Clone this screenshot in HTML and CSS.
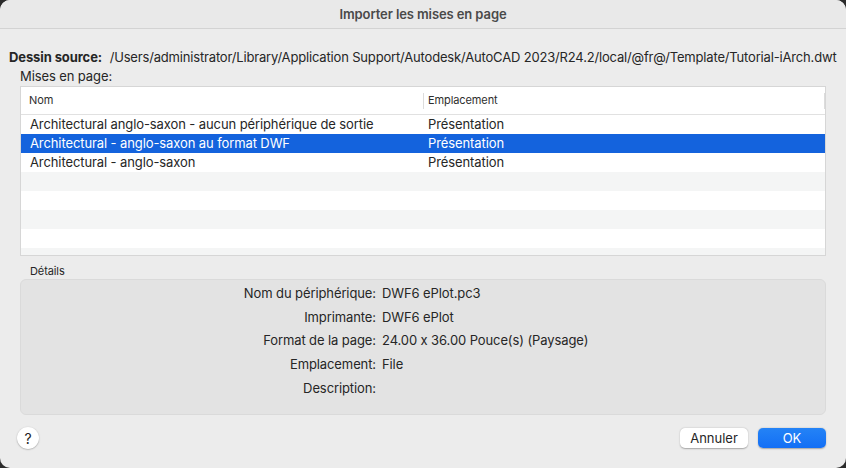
FILE: index.html
```html
<!DOCTYPE html>
<html lang="fr">
<head>
  <meta charset="UTF-8" />
  <title>Importer les mises en page</title>
  <link rel="stylesheet" href="styles.css">
</head>
<body>

  <div class="window">
    <div class="titlebar">Importer les mises en page</div>

    <div class="source">
      <span class="source-label">Dessin source:</span>
      <span class="source-path">/Users/administrator/Library/Application Support/Autodesk/AutoCAD 2023/R24.2/local/@fr@/Template/Tutorial-iArch.dwt</span>
    </div>

    <div class="main">
      <div class="section-label">Mises en page:</div>

      <div class="table">
        <div class="thead">
          <div class="col-name">Nom</div>
          <div class="col-place"><span class="sep"></span>Emplacement</div>
          <span class="sep sep-end"></span>
        </div>
        <div class="tbody">
          <div class="row">
            <div class="col-name">Architectural anglo-saxon - aucun périphérique de sortie</div>
            <div class="col-place">Présentation</div>
          </div>
          <div class="row selected">
            <div class="col-name">Architectural - anglo-saxon au format DWF</div>
            <div class="col-place">Présentation</div>
          </div>
          <div class="row">
            <div class="col-name">Architectural - anglo-saxon</div>
            <div class="col-place">Présentation</div>
          </div>
          <div class="row"></div>
          <div class="row"></div>
          <div class="row"></div>
          <div class="row"></div>
          <div class="row"></div>
        </div>
      </div>

      <div class="details-label">Détails</div>
      <div class="details">
        <div class="dt">Nom du périphérique:</div><div class="dd">DWF6 ePlot.pc3</div>
        <div class="dt">Imprimante:</div><div class="dd">DWF6 ePlot</div>
        <div class="dt">Format de la page:</div><div class="dd">24.00 x 36.00 Pouce(s) (Paysage)</div>
        <div class="dt">Emplacement:</div><div class="dd">File</div>
        <div class="dt">Description:</div><div class="dd"></div>
      </div>
    </div>

    <div class="footer">
      <button class="help">?</button>
      <div class="actions">
        <button class="btn">Annuler</button>
        <button class="btn primary">OK</button>
      </div>
    </div>
  </div>

</body>
</html>
```

FILE: styles.css
```css
* {
  box-sizing: border-box;
}

html, body {
  margin: 0;
  height: 100%;
}

body {
  background-color: #2b2b2b;
  font-family: Inter, 'Liberation Sans', sans-serif;
  font-size: 13px;
  letter-spacing: -0.1px;
  font-feature-settings: "calt" 0;
  color: #262626;
}

.window {
  width: 846px;
  height: 468px;
  background-color: #ececec;
  border-radius: 10px;
  overflow: hidden;
  display: flex;
  flex-direction: column;
}

.titlebar {
  height: 29px;
  flex: none;
  background-color: #e9e9e9;
  border-bottom: 1px solid #d3d3d3;
  text-align: center;
  line-height: 28px;
  font-weight: 600;
  color: #4a4a4a;
}

.source {
  padding: 20px 0 0 9px;
  line-height: 16px;
  white-space: nowrap;
}

.source-label {
  font-weight: 700;
  margin-right: 4px;
}

.source-path {
  letter-spacing: -0.17px;
}

.main {
  margin: 0 20px;
}

.section-label {
  line-height: 16px;
  margin-top: 3px;
  height: 18px;
}

.table {
  height: 170px;
  background-color: #fff;
  border: 1px solid #d6d6d6;
  overflow: hidden;
}

.thead {
  position: relative;
  display: flex;
  height: 28px;
  border-bottom: 1px solid #e1e1e1;
  font-size: 11px;
  line-height: 27px;
  color: #2e2e2e;
}

.row {
  display: flex;
  height: 19px;
  line-height: 19px;
}

.row:nth-child(even) {
  background-color: #f4f5f5;
}

.row.selected {
  background-color: #1463dd;
  color: #fff;
}

.col-name {
  width: 402px;
  padding-left: 8px;
}

.row .col-name {
  padding-left: 9px;
}

.col-place {
  position: relative;
  flex: 1;
  padding-left: 5px;
}

.sep {
  position: absolute;
  left: 0;
  top: 6px;
  width: 1px;
  height: 16px;
  background-color: #dcdcdc;
}

.sep-end {
  left: auto;
  right: 0;
}

.details-label {
  font-size: 11px;
  line-height: 14px;
  padding: 8px 0 0 10px;
  height: 23px;
}

.details {
  height: 136px;
  background-color: #e3e3e3;
  border: 1px solid #dadada;
  border-radius: 6px;
  padding-top: 1px;
  display: grid;
  grid-template-columns: 355px 1fr;
  grid-auto-rows: 23.75px;
  align-items: center;
  column-gap: 6px;
}

.dt {
  text-align: right;
}

.footer {
  display: flex;
  justify-content: space-between;
  align-items: center;
  padding: 12px 20px 0 17px;
}

button {
  font-family: inherit;
  font-size: 13px;
  border: none;
  cursor: pointer;
}

.help {
  width: 22px;
  height: 22px;
  border-radius: 50%;
  background-color: #fff;
  color: #222;
  padding: 0;
  font-size: 14px;
  box-shadow: 0 0.5px 1.5px rgba(0,0,0,0.35);
}

.actions {
  display: flex;
  gap: 10px;
}

.btn {
  width: 68px;
  height: 20px;
  border-radius: 5px;
  background-color: #fff;
  color: #262626;
  padding: 0;
  box-shadow: 0 0.5px 1.5px rgba(0,0,0,0.3);
}

.btn.primary {
  background: linear-gradient(#2483f6, #136ff5);
  color: #fff;
}
```
